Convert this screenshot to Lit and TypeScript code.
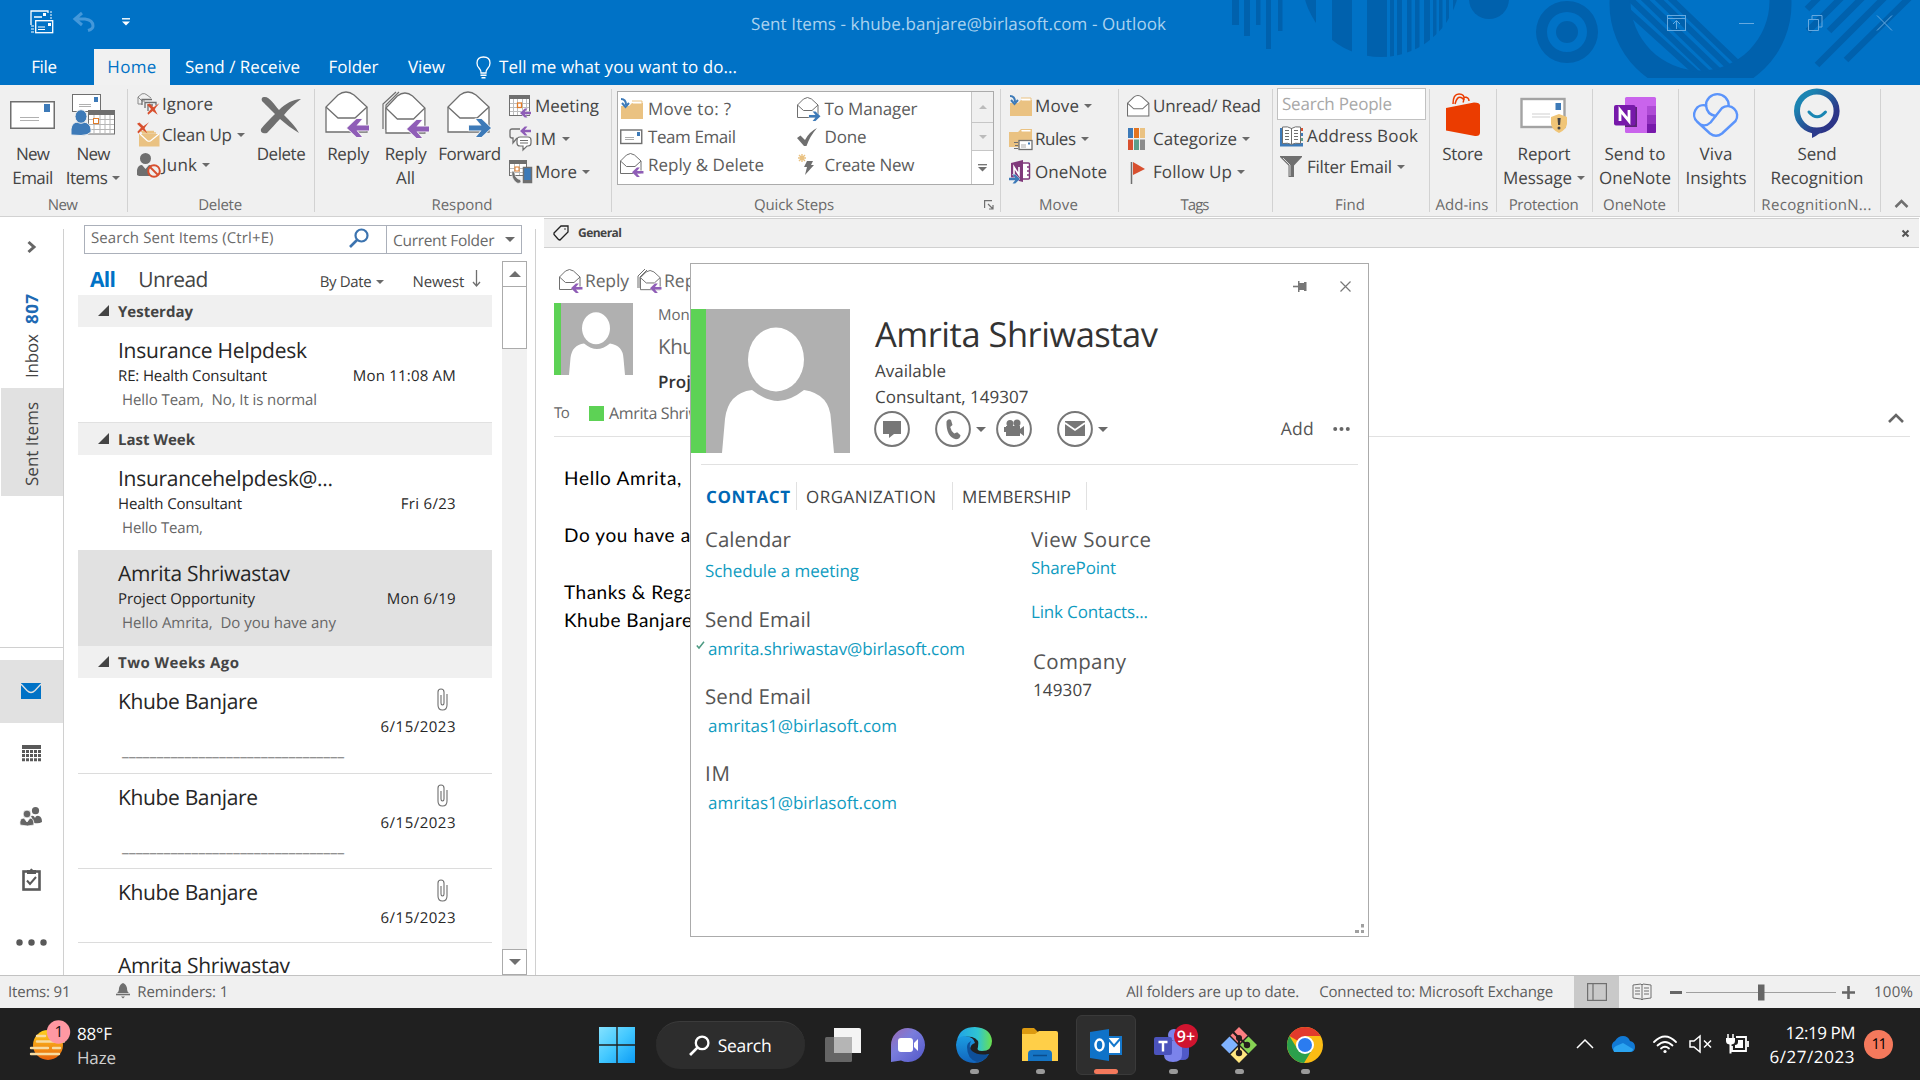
import { LitElement, html, svg, css, nothing } from "lit";
import { customElement } from "lit/decorators.js";

const SANS = '"Open Sans"';
const BODY = "Lato";
const ctx = document.createElement("canvas").getContext("2d")!;

/** Text run tracked so that it takes the given advance width. */
function t(text: string, width: number | null, size = 17, cls = "", family = SANS) {
  let spacing = 0;
  if (width !== null) {
    const weight = cls.includes("bold") ? 700 : cls.includes("semi") ? 600 : 400;
    ctx.font = `${weight} ${size}px ${family}`;
    spacing = (width - ctx.measureText(text).width) / Math.max(1, text.length - 1);
    spacing = Math.max(-1.6, Math.min(1.2, spacing));
  }
  return html`<span class="t ${cls}" style="font-size:${size}px;letter-spacing:${spacing.toFixed(3)}px">${text}</span>`;
}

const ic = (w: number, h: number, body: unknown, vb = `0 0 ${w} ${h}`) =>
  html`<svg class="ic" width=${w} height=${h} viewBox=${vb} fill="none">${body}</svg>`;

const caret = html`<i class="caret"></i>`;
const G = "#6f6f6f";
const P = "#8f5db7";
const B = "#3d7ab8";
const O = "#eac282";
const R = "#d8502f";

const arrowL = (x: number, y: number, s: number, c = P) => svg`
  <g transform="translate(${x} ${y}) scale(${s})"><path d="M22 7.5H9.500L15 1H9.500L0 10l9.500 9H15L9.500 12.500H22z" fill=${c} stroke="#f6f6f6" stroke-width="1.500" paint-order="stroke"/></g>`;
const arrowR = (x: number, y: number, s: number, c = B) => svg`
  <g transform="translate(${x + 22 * s} ${y}) scale(${-s} ${s})"><path d="M22 7.5H9.500L15 1H9.500L0 10l9.500 9H15L9.500 12.500H22z" fill=${c} stroke="#f6f6f6" stroke-width="1.500" paint-order="stroke"/></g>`;
const openEnv = (k = 1.3) => svg`
  <path d="M1 41V16L13 4Q21-2 29 4L42 16V41z" fill="#fff" stroke=${G} stroke-width=${k}/>
  <path d="M1 16L13 27H30L42 16" stroke=${G} stroke-width=${k}/>`;
const bigReply = ic(46, 48, svg`${openEnv()}${arrowL(22, 27, 1)}`);
const bigReplyAll = ic(48, 48, svg`<path d="M1 38V13L14 1M4 39V14L17 1" stroke=${G} stroke-width="1.2"/><g transform="translate(3 1) scale(.95 1)">${openEnv()}</g>${arrowL(25, 28, 1)}`);
const bigForward = ic(46, 48, svg`${openEnv()}${arrowR(22, 27, 1)}`);
const smReply = ic(24, 24, svg`<g transform="scale(.5)">${openEnv(2)}</g>${arrowL(12, 14, 0.52)}`);
const smReplyAll = ic(25, 24, svg`<path d="M1 19V7L8 0M3 19V8L10 1" stroke=${G}/><g transform="translate(3 1) scale(.48)">${openEnv(2)}</g>${arrowL(13, 14, 0.52)}`);
const smForward = ic(24, 24, svg`<g transform="scale(.5)">${openEnv(2)}</g>${arrowR(12, 14, 0.52)}`);
const smRead = ic(23, 22, svg`<g transform="scale(.52 .51)">${openEnv(2)}</g>`);

const newEmail = ic(45, 28, svg`<rect x=".75" y=".75" width="43.5" height="26.5" fill="#fff" stroke=${G} stroke-width="1.5"/><path d="M34 3h6v8h-6z" fill=${B}/><path d="M10 16.500h19M10 19.500h19" stroke="#b0b0b0"/>`);
const newItems = ic(44, 42, svg`<rect x="1.500" y=".5" width="28" height="17" fill="#fff" stroke=${G}/><path d="M23 3h4v5h-4z" fill=${B}/><path d="M8 10.500h12M8 12.500h12" stroke="#b0b0b0"/>
  <rect x="17.500" y="16.500" width="26" height="23.500" fill="#fff" stroke=${G}/><path d="M17 16h27v5H17z" fill=${G}/><path d="M18 25.500h25M18 30.500h25M18 35.500h25M23 21v18M29 21v18M34 21v18M39 21v18" stroke="#b5b5b5"/><rect x="22.500" y="24.500" width="5" height="5" fill="#fff" stroke="#e07b28"/>
  <path d="M0 41V35Q1 28 7 28H13Q19 29 20 35V38Q17 41.500 10 41.500Z" fill=${B} stroke="#f0f0f0"/><ellipse cx="10" cy="22.500" rx="6" ry="6.800" fill=${B} stroke="#f0f0f0"/>`);
const cross = (x: number, y: number, s: number, c: string) => svg`<path transform="translate(${x} ${y}) scale(${s})" d="M0 1L3-.5 8 4 15-1C12 3 10 5 9.500 6.500L13 13C9 10 7 9 7 8.500L1.500 13 .5 11 5 6z" fill=${c}/>`;
const ignore = ic(23, 23, svg`<path d="M1 11V4L5 .8Q8 0 10 2l4 3M1 4l4 4h3M1 11h4" stroke="#8a8a8a"/><path d="M5 12V6.500H15M8 15V9.500H19v3M11 18v-6h5" stroke=${G} stroke-width="1.300"/>${cross(10, 11, 0.82, R)}`);
const cleanup = ic(23, 24, svg`<path d="M5 10h14M4 8.500h13" stroke=${O} stroke-width="1.500"/><path d="M2 11H22.500V23.500H2z" fill=${O}/><path d="M3 11l7 6.500q2 1.500 4 0L22 11" stroke="#fff" stroke-width="1.200"/>${cross(0, 0, 0.8, R)}`);
const junk = ic(24, 25, svg`<ellipse cx="8.500" cy="5.500" rx="5.500" ry="5.500" fill=${G}/><path d="M0 22v-5Q1 12 5 12l3.500 4L12 12q4 0 5 4v7H2z" fill=${G}/><circle cx="17" cy="18" r="5.800" fill="#f0f0f0" stroke=${R} stroke-width="2"/><path d="M13 14l8 8" stroke=${R} stroke-width="2"/>`);
const bigX = ic(42, 38, svg`<path d="M4 1C9 0 14 8 19 14 25 8 33 3 41 3 34 8 28 14 24 19 30 25 36 31 39 37 32 33 26 28 20 23 15 28 11 33 7 37 4 38 0 37 1 33 4 29 9 24 15 18 9 12 4 7 2 5 1 3 2 1 4 1z" fill=${G}/>`);
const meeting = ic(24, 23, svg`<rect x=".5" y=".5" width="20" height="20" fill="#fff" stroke=${G}/><path d="M0 0h21v4H0z" fill=${G}/><path d="M1 8.500h19M1 12.500h19M1 16.500h19M4.500 4v16M8.500 4v16M13.500 4v16M17.500 4v16" stroke="#bdbdbd"/><rect x="8.500" y="8" width="4" height="4.500" fill="#fff" stroke="#e07b28" stroke-width="1.300"/>${arrowL(11, 13, 0.5)}`);
const im = ic(24, 24, svg`<path d="M11 2H3Q1 2 1 4v5q0 2 2 2h1v5l4-5" stroke=${G} stroke-width="1.300"/>${arrowL(11, -1, 0.5)}<path d="M11 10h8q3 0 3 3v3q0 3-3 3h-1l-4 4v-4h-3q-3 0-3-3v-3q0-3 3-3zM11 13.500h8M11 16h8" fill="#fff" stroke=${G} stroke-width="1.200"/>`);
const more = ic(24, 24, svg`<rect x=".5" y=".5" width="17" height="15" fill="#fff" stroke=${G}/><path d="M0 0h18v4H0z" fill=${G}/><path d="M1 8.500h16M1 12.500h16M5.500 4v11M10.500 4v11" stroke="#bdbdbd"/><rect x="6" y="7" width="4" height="4" fill="#fff" stroke="#e07b28"/><path d="M3 11q3 0 3 4 0 2 3 4 3 0 3 3-2 2-4 1-6-4-5-12z" fill=${G} stroke="#f0f0f0" stroke-width=".6"/><rect x="14.500" y="7.500" width="8" height="15" fill=${B} stroke=${G} stroke-width="1.500"/><path d="M14 20h9v3h-9z" fill=${G}/>`);
const folderArrow = ic(24, 22, svg`<path d="M1 8h8l3-3h11v16H1z" fill=${O}/><path d="M12 3h10v3H13" fill="#fff" stroke=${O}/><path d="M1 1q5 0 5 6M2 5l3.500 4L9 5" stroke=${B} stroke-width="2"/>`);
const rules = ic(24, 23, svg`<path d="M0 4h9l3-3h11v18H0z" fill=${O}/><path d="M12 1.500h10V4h-9" fill="#fff" stroke=${O}/><rect x="10" y="12.500" width="13" height="9" fill="#fff" stroke=${G} stroke-width="1.300"/><path d="M12 17h5M12 19h5" stroke="#aaa"/><path d="M19 14.500h2v2h-2z" fill=${B}/><path d="M5 14.500h4M6 17.500h3M5 20.500h4" stroke=${G}/>`);
const onenoteSm = ic(24, 24, svg`<rect x="12" y="3" width="8.500" height="16" rx="1" fill="#fff" stroke="#80397b" stroke-width="1.500"/><path d="M18 7h3M18 11h3M18 15h3" stroke="#80397b" stroke-width="1.500"/><path d="M2 3l12-3v22L2 19z" fill="#80397b"/><path d="M5 15V7l5 8V7" stroke="#fff" stroke-width="1.600"/>${arrowR(0, 14, 0.5)}`);
const mailSm = ic(24, 16, svg`<rect x=".75" y="1" width="21" height="13.500" fill="#fff" stroke=${G} stroke-width="1.400"/><path d="M17 3h3v4h-3z" fill=${B}/><path d="M5 8.500h9M5 10.500h9" stroke="#aaa"/>`);
const tick = ic(22, 19, svg`<path d="M0 10l3.500-2.500L8 12Q12 4 20 0 13 8 9.500 18H7z" fill=${G}/>`);
const spark = ic(24, 24, svg`<path d="M5 1v8M1 5h8M2 2l6 6M8 2L2 8" stroke=${O} stroke-width="1.400"/><path d="M10 8h6l-2 4h3L8 22l2-8H7z" fill=${G}/>`);
const categorize = ic(20, 23, svg`<path d="M1 0h5v10H1z" fill=${B}/><path d="M7 0h5v10H7z" fill="#e3741f"/><path d="M13 0h5v10h-5z" fill=${O}/><path d="M1 11.500h5v10.500H1z" fill=${R}/><path d="M7 11.500h5v10.500H7z" fill="#5d9e8a"/><path d="M13 11.500h5v10.500h-5z" fill="#8c8c8c"/>`);
const flag = ic(20, 23, svg`<path d="M4.500 1v22" stroke=${G} stroke-width="1.500"/><path d="M6 1l12 7-12 6z" fill=${R}/>`);
const book = ic(24, 21, svg`<path d="M0 2h3v15h20v3.500H0z" fill=${B}/><path d="M2.500 1Q8 0 11.500 2.500 15 0 20.500 1v16.500Q15 16.500 11.500 18.500 8 16.500 2.500 17.500z" fill="#fff" stroke=${G}/><path d="M11.500 2v16M5 4.500h4M5 7.500h4M5 10.500h4M5 13.500h4M14 4.500h4M14 7.500h4M14 10.500h4M14 13.500h4" stroke=${G}/><path d="M21 2h2v3h-2z" fill=${R}/><path d="M21 7h2v3h-2z" fill=${B}/><path d="M21 12h2v3h-2z" fill="#5d9e8a"/>`);
const funnel = ic(24, 22, svg`<path d="M0 0h22v1l-8 8.500V21H8.500V9.500L0 1z" fill=${G}/><path d="M3 2l7 7v11" stroke="#d6d6d6"/>`);
const store = ic(36, 43, svg`<path d="M8 11Q8 1 14 1t5 6M10 11Q12 3 16 4.500t2 5M19 4q5 0 5 4" stroke="#eb3c00" stroke-width="1.500"/><path d="M1 15L29 9.500q6 0 6 3v27q0 4-5 3.500L1 37.500z" fill="#eb3c00"/>`);
const report = ic(48, 36, svg`<rect x="1.500" y="2" width="43" height="28" fill="#fff" stroke="#a3a3a3" stroke-width="2.400"/><path d="M35.500 6h5.500v7h-5.500z" fill=${B}/><path d="M12 17h18M12 20h18" stroke="#cfcfcf"/><path d="M39 17l8 3v7q-1 6-8 9-7-3-8-9v-7z" fill="#f0c577"/><path d="M37.500 21h3.200l-.6 7h-2z" fill="#444"/><circle cx="39" cy="31" r="1.500" fill="#444"/>`);
const onenoteBig = ic(44, 38, svg`<rect x="12" y="1" width="31" height="36" rx="1.500" fill="#c964ec"/><path d="M34 10h9v9h-9z" fill="#ae4bd5"/><path d="M34 19h9v9h-9z" fill="#9332bf"/><path d="M34 28h9v7.500q0 1.500-1.500 1.500H34z" fill="#7719aa"/><rect x="12" y="11" width="12" height="20" fill="#34104c" opacity=".75"/><rect x="1" y="9" width="21.500" height="20.500" rx="2" fill="#7719aa"/><path d="M7 25v-11l9 11v-11" stroke="#fff" stroke-width="2.800"/>`);
const viva = ic(46, 47, svg`<g stroke="#5b94fb" stroke-width="2.400" stroke-linejoin="round" stroke-linecap="round"><path d="M13 14.500a11.300 11.300 0 1 1 22.700 0"/><path d="M13 14.500q1 9 9.500 10.500"/><path d="M13 14.500A9.500 9.500 0 0 0 4 30.500L17 42.500q6 4.500 12 0L42.500 30A9.500 9.500 0 0 0 29 17L17.500 31.500q-4 4-9 2.500"/></g>`);
const recog = ic(46, 49, svg`<defs><linearGradient id="rg" x1="0" y1="0" x2="1" y2="1"><stop offset=".2" stop-color="#1b84b2"/><stop offset=".75" stop-color="#2c3587"/></linearGradient></defs><ellipse cx="22.800" cy="21" rx="19.800" ry="19.500" stroke="url(#rg)" stroke-width="6"/><path d="M18 39h11q-1 4-11 9z" fill="#2c3b8c"/><path d="M15 22q8 9.500 16.500 0" stroke="#1a86b3" stroke-width="3" stroke-linecap="round"/>`);

const avatarShape = svg`<path d="M0 0h144v144H0z" fill="#b0b0b0"/><ellipse cx="70" cy="50.500" rx="28" ry="32" fill="#fff"/><path d="M16 144l3-34Q22 84 46 81q14 11 26 11t26-11q26 4 27 30l3 33z" fill="#fff"/>`;
const clip = ic(12, 23, svg`<path d="M1 7v10q0 5 4.500 5t4.500-5V6M1 7V4q0-3 3-3t3 3v11q0 2-1.500 2T4 15V7" stroke=${G} stroke-width="1.100"/>`);
const mag = (c: string, s = 20) => ic(s, s, svg`<circle cx="12.500" cy="7.500" r="6" stroke=${c} stroke-width="2.200"/><path d="M8 12l-7 7" stroke=${c} stroke-width="2.600"/>`, "0 0 20 20");

interface Mail { name: string; nw: number; subj?: string; sw?: number; date: string; dw: number; pre?: string; pw?: number; cls?: string; clip?: boolean }
const mails: (Mail | { head: string; w: number; cls?: string })[] = [
  { head: "Yesterday", w: 75 },
  { name: "Insurance Helpdesk", nw: 189, subj: "RE: Health Consultant", sw: 149, date: "Mon 11:08 AM", dw: 103, pre: "Hello Team,  No, It is normal", pw: 195 },
  { head: "Last Week", w: 77, cls: "lined" },
  { name: "Insurancehelpdesk@...", nw: 215, subj: "Health Consultant", sw: 124, date: "Fri 6/23", dw: 55, pre: "Hello Team,", pw: 81 },
  { name: "Amrita Shriwastav", nw: 172, subj: "Project Opportunity", sw: 137, date: "Mon 6/19", dw: 69, pre: "Hello Amrita,  Do you have any", pw: 214, cls: "sel" },
  { head: "Two Weeks Ago", w: 121 },
  { name: "Khube Banjare", nw: 140, date: "6/15/2023", dw: 75, pre: "_".repeat(32), pw: 222, clip: true, cls: "ruled tall" },
  { name: "Khube Banjare", nw: 140, date: "6/15/2023", dw: 75, pre: "_".repeat(32), pw: 222, clip: true, cls: "ruled" },
  { name: "Khube Banjare", nw: 140, date: "6/15/2023", dw: 75, clip: true, cls: "ruled short" },
  { name: "Amrita Shriwastav", nw: 172, date: "", dw: 0, cls: "last" },
];

@customElement("app-root")
export class AppRoot extends LitElement {
  static styles = css`
    :host { display: block; width: 1920px; height: 1080px; overflow: hidden; font-family: "Open Sans", "Noto Sans", sans-serif; color: #444; text-rendering: geometricPrecision; }
    * { box-sizing: border-box; }
    .t { white-space: pre; display: inline-block; line-height: 24px; }
    .bold { font-weight: 700; } .semi { font-weight: 600; }
    .ic { display: block; flex: none; overflow: visible; }
    .caret { display: inline-block; flex: none; width: 0; height: 0; border: 4px solid transparent; border-top: 4px solid #6a6a6a; border-bottom: 0; margin-left: 5px; vertical-align: middle; }
    .row { display: flex; align-items: center; }
    .win { display: flex; flex-direction: column; height: 1080px; background: #fff; position: relative; }

    .top { height: 85px; background: #0072c6; position: relative; flex: none; color: #fff; }
    .art { position: absolute; right: 0; top: 0; }
    .title { height: 49px; display: flex; align-items: center; padding-left: 30px; position: relative; }
    .qat { display: flex; align-items: center; width: 721px; height: 49px; padding-bottom: 6px; }
    .qat .undo { margin-left: 19px; } .qat .cust { margin-left: 27px; }
    .caption { color: #abd2ef; height: 26px; }
    .ctrls { display: flex; margin-left: auto; gap: 52px; padding-right: 27px; padding-bottom: 4px; }
    .tabs { display: flex; height: 36px; position: relative; }
    .tab { display: flex; align-items: center; justify-content: center; color: #fff; }
    .file { width: 94px; padding-right: 6px; } .home { width: 76px; background: #f1f1f1; color: #0072c6; }
    .sr { width: 145px; } .fo { width: 77px; } .vi { width: 69px; } .tell { margin-left: 15px; gap: 8px; }

    .ribbon { height: 132px; flex: none; background: #f0f0f0; border-bottom: 1px solid #d2d2d2; display: grid; grid-template-columns: 128px 187px 297px 389px 118px 154px 157px 67px 96px 86px 76px 126px 39px; color: #444; }
    .group { display: flex; flex-direction: column; background: linear-gradient(#d2d2d2, #d2d2d2) right 0 top 4px / 1px 123px no-repeat; }
    .gbody { display: flex; height: 108px; }
    .glabel { height: 23px; display: flex; justify-content: center; align-items: center; color: #6a6a6a; position: relative; padding-right: 3px; }
    .wide .glabel { padding-right: 25px; }
    .launch { position: absolute; right: 7px; top: 7px; }
    .big { display: flex; flex-direction: column; align-items: center; }
    .bigic { height: 57px; padding-top: 2px; display: flex; align-items: center; }
    .bigl { display: flex; align-items: center; height: 24px; }
    .w65 { width: 65px; } .w56 { width: 56px; } .w63 { width: 62px; } .w66 { width: 66px; } .w50 { width: 49px; } .w78 { width: 79px; } .full { width: 100%; padding-right: 2px; }
    .smalls { display: flex; flex-direction: column; }
    .d30 { padding-top: 4.500px; } .d30 .sm { height: 30.500px; }
    .d33 { padding-top: 4.500px; } .d33 .sm { height: 33px; }
    .sm { display: flex; align-items: center; }
    .sic { width: 26px; display: flex; }
    .pl9 { padding-left: 9px; width: 122px; padding-top: 4px; } .pl9 .sic { width: 25px; } .pl8 { padding-left: 8px; } .find { padding-left: 4px; padding-top: 5px; }
    .find .sic { width: 30px; padding-left: 3px; }
    .find .sp { height: 32px; margin-top: -2px; margin-bottom: 1px; width: 149px; border: 1px solid #c1c1c1; background: #fff; padding-left: 4px; color: #a8a8a8; }
    .steps { margin: 6px 0 0 5px; width: 377px; height: 94px; border: 1px solid #ababab; display: flex; background: #fff; color: #5c5c5c; }
    .scol { padding: 3px 0 0 2px; width: 177px; } .scol .sm { height: 28px; } .scol .sic { width: 28px; }
    .sscroll { margin-left: auto; width: 22px; display: grid; grid-template-rows: 31px 28px 1fr; border-left: 1px solid #c6c6c6; }
    .sscroll div { display: flex; align-items: center; justify-content: center; background: #f0f0f0; border-bottom: 1px solid #c6c6c6; } .sscroll div:last-child { background: #fff; border: 0; }
    .collapse { display: flex; align-items: flex-end; padding: 0 0 8px 13px; }

    .main { display: flex; flex: 1; min-height: 0; }
    .nav { width: 64px; display: flex; flex-direction: column; background: linear-gradient(#d0d0d0, #d0d0d0) right 0 top 12px / 1px 100% no-repeat; }
    .exp { height: 61px; padding: 24px 0 0 27px; }
    .vt { writing-mode: vertical-rl; transform: rotate(180deg); width: 62px; margin-left: 1px; display: flex; align-items: center; justify-content: center; color: #444; gap: 10px; }
    .vt .t { line-height: 60px; }
    .inbox { height: 110px; padding-top: 0; padding-bottom: 5px; } .inbox .t.bold { color: #1e6ab4; }
    .sent { height: 108px; background: #e1e1e1; padding-bottom: 4px; }
    .mods { margin-top: 151px; border-top: 1px solid #d0d0d0; width: 63px; padding-top: 12px; display: flex; flex-direction: column; }
    .mod { height: 63px; display: flex; align-items: center; justify-content: center; padding: 0 1px 2px 0; }
    .mod.on { background: #e1e1e1; }

    .list { width: 472px; padding-left: 14px; background: linear-gradient(#d0d0d0, #d0d0d0) right 0 top 12px / 1px 100% no-repeat; display: flex; flex-direction: column; overflow: hidden; }
    .search { margin: 8px 0 1px 6px; width: 438px; height: 29px; border: 1px solid #abb0ba; display: flex; color: #6a6a6a; flex: none; }
    .sbox { width: 302px; display: flex; justify-content: space-between; padding: 0 17px 3px 6px; align-items: center; border-right: 1px solid #abb0ba; }
    .sdd { display: flex; align-items: center; padding-left: 6px; padding-top: 1px; } .sdd .caret { border-width: 5px 5px 0; margin-left: 11px; margin-bottom: 2px; }
    .lwrap { display: flex; flex: 1; min-height: 0; }
    .lcol { width: 414px; overflow: hidden; }
    .filter { height: 40px; display: flex; align-items: center; padding: 9px 0 0 12px; }
    .filter .all { color: #0072c6; } .filter .un { margin-left: 23px; } .filter .by { margin-left: 112px; margin-top: 4px; } .filter .nw { margin-left: 28px; margin-top: 4px; } .filter svg { margin: -1px 0 0 8px; }
    .ghead { height: 32px; background: #f0f0f0; display: flex; align-items: center; gap: 9px; padding-left: 20px; }
    .ghead .t { margin-top: 1px; } .ghead svg { margin-top: -1px; }
    .ghead.lined { height: 33px; border-top: 1px solid #e1e1e1; }
    .mail { height: 95px; padding: 9px 36px 0 40px; color: #262626; }
    .mail.sel { background: #e1e1e1; height: 96px; } .mail.ruled { border-bottom: 1px solid #dcdcdc; padding-top: 8.500px; } .mail.tall { height: 96px; padding-top: 9px; } .mail.short { height: 74px; } .mail.last { padding-top: 8px; }
    .m1 { height: 30px; display: flex; align-items: center; justify-content: space-between; } .m1 svg { margin: -5px 7px 0 0; }
    .m2 { height: 20px; display: flex; align-items: center; justify-content: space-between; }
    .m3 { height: 20px; display: flex; align-items: center; margin-top: 4px; padding-left: 4px; color: #666; }
    .sb { margin: 6px 0 0 10px; width: 25px; background: #f1f1f1; display: flex; flex-direction: column; }
    .sbb { height: 26px; border: 1px solid #ababab; background: #fff; display: flex; align-items: center; justify-content: center; }
    .thumb { height: 63px; margin-top: -1px; border: 1px solid #ababab; background: #fff; } .down { margin-top: auto; }

    .read { flex: 1; padding-left: 8px; min-width: 0; }
    .rlabel { margin: 1px 1px 0 0; height: 30px; background: #f0f0f0; border: solid #d0d0d0; border-width: 1px 0; display: flex; align-items: center; padding: 0 10px 0 9px; gap: 9px; color: #444; } .rlabel .x { margin-left: auto; }
    .rbar { height: 55px; padding: 11px 0 0 15px; display: flex; align-items: center; gap: 2px; color: #666; } .rbar .second { margin-left: 6px; }
    .rhead { display: flex; padding-left: 10px; height: 94px; }
    .av { width: 79px; height: 72px; display: flex; background: #5dd255; } .av svg { margin-left: 7px; }
    .rmeta { margin-left: 25px; display: flex; flex-direction: column; color: #666; }
    .h24 { height: 24px; } .h40 { height: 40px; display: flex; align-items: center; } .h30 { height: 30px; display: flex; align-items: center; color: #333; }
    .rto { margin: 0 10px; height: 40px; padding-bottom: 7px; border-bottom: 1px solid #e1e1e1; display: flex; align-items: center; color: #666; } .rto .pres { width: 15px; height: 15px; background: #5dd255; margin: 0 5px 0 21px; } .rto svg { margin-left: auto; margin-right: 6px; margin-top: 9px; }
    .body { padding: 28px 0 0 20px; color: #000; font-family: Lato, sans-serif; } .body .t { display: block; line-height: 28.400px; height: 28.400px; }

    .card { position: absolute; left: 690px; top: 263px; width: 679px; height: 674px; border: 1px solid #ababab; background: #fff; }
    .ctop { height: 45px; display: flex; justify-content: flex-end; align-items: center; padding: 0 17px 1px 0; gap: 33px; }
    .chead { display: flex; height: 144px; } .photo { display: flex; background: #5dd255; padding-left: 15px; width: 159px; }
    .cinfo { flex: 1; padding-left: 25px; color: #444; display: flex; flex-direction: column; }
    .cname { height: 49px; display: flex; align-items: center; color: #333; padding-top: 2px; } .cname .t { line-height: 50px; }
    .cl { height: 26px; display: flex; align-items: center; }
    .acts { height: 38px; display: flex; align-items: center; margin-left: -1px; }
    .acts .gap1 { margin-left: 25px; } .acts .caret { border-width: 5px 5px 0; margin: 0 0 0 5px; } .acts .vid { margin-left: 10px; } .acts .mail2 { margin-left: 25px; }
    .acts .add { margin-left: auto; margin-right: 19px; color: #555; } .acts .dots { margin-right: 18px; }
    .ctabs { margin: 11px 10px 0; border-top: 1px solid #e1e1e1; padding: 17px 0 0 5px; display: flex; height: 53px; }
    .ct { height: 28px; border-right: 1px solid #e1e1e1; display: flex; align-items: center; padding-top: 1px; } .ct1 { width: 91px; color: #0067b5; } .ct2 { width: 156px; padding-left: 9px; } .ct3 { width: 134px; padding-left: 9px; }
    .cbody { display: grid; grid-template-columns: 326px 1fr; padding: 8px 0 0 14px; }
    .sec { display: flex; flex-direction: column; } .sec .h { height: 30px; display: flex; align-items: center; color: #555; } .sec .l { height: 24px; display: flex; align-items: center; color: #0f9bc0; }
    .sec .ind { padding-left: 3px; margin-top: 2px; } .chk { margin: -8px 3px 0 -12px; }
    .mb1 { margin-bottom: 22px; } .mt1 { margin-top: 4px; } .sec .near { margin-top: 1px; } .mt2 { margin-top: 20px; } .co { padding-left: 2px; margin-top: 23px; } .sec .dark { color: #444; margin-top: 1px; }
    .s23 { margin-bottom: 21px; }
    .grip { position: absolute; right: 4px; bottom: 3px; }

    .status { height: 33px; flex: none; background: #f0f0f0; border-top: 1px solid #c2c2c2; display: flex; align-items: center; color: #5c5c5c; padding-left: 8px; }
    .status .bell { margin: 0 7px 2px 46px; } .status .allf { margin-left: auto; } .status .conn { margin: 0 21px 0 20px; }
    .vw { width: 45px; height: 32px; background: #c9c9c9; display: flex; align-items: center; justify-content: center; } .bk { margin-left: 13px; } .zoom { margin-left: 18px; margin-right: 18px; } .pct { width: 46px; }

    .task { height: 72px; flex: none; background: #202020; display: flex; color: #fff; position: relative; }
    .weather { width: 599px; display: flex; padding-left: 28px; } .weather .wi { margin-top: 10px; } .wt { margin-left: 11px; padding-top: 14px; display: flex; flex-direction: column; } .wt .haze { color: #cfcfcf; }
    .app { display: flex; flex-direction: column; align-items: center; justify-content: center; height: 72px; position: relative; padding-top: 2px; }
    .app.dot::after { content: ""; position: absolute; left: calc(50% - 4px); bottom: 6px; width: 9px; height: 5px; border-radius: 3px; background: #9a9a9a; }
    .pill { margin: 13px 20px 0 21px; width: 149px; height: 48px; border-radius: 24px; background: #2d2d2d; border-top: 1px solid #3b3b3b; display: flex; align-items: center; justify-content: center; gap: 8px; padding-right: 1px; }
    .ol { width: 60px; height: 60px; margin: 7px 0 0; border-radius: 6px; background: #2e2e2e; border: 1px solid #3a3a3a; padding-top: 0; } .app.ol::after { content: ""; position: absolute; left: 17px; bottom: 0; width: 24px; height: 5px; border-radius: 3px; background: #f4795c; }
    .a36 { width: 36px; } .g30 { margin-left: 30px; } .g29 { margin-left: 29px; } .g18 { margin-left: 18px; }
    .tray { margin-left: auto; display: flex; align-items: center; padding-right: 27px; } .clock { display: flex; flex-direction: column; align-items: flex-end; width: 86px; margin: 0 9px 0 19px; padding-top: 1px; }
    .nb { width: 29px; height: 29px; background: #f4795c; border-radius: 50%; color: #000; display: flex; align-items: center; justify-content: center; }
    .g1 { margin-left: 16px; } .g2 { margin-left: 18px; } .g3 { margin-left: 12px; } .g4 { margin-left: 13px; }
  `;

  private small(icon: unknown, text: string, w: number, drop = false) {
    return html`<div class="sm"><div class="sic">${icon}</div>${t(text, w)}${drop ? caret : nothing}</div>`;
  }
  private big(cls: string, icon: unknown, a: string, aw: number, b = "", bw = 0, drop = false) {
    return html`<div class="big ${cls}"><div class="bigic">${icon}</div><div class="bigl">${t(a, aw)}</div>
      ${b ? html`<div class="bigl">${t(b, bw)}${drop ? caret : nothing}</div>` : nothing}</div>`;
  }
  private group(label: string, w: number, body: unknown, extra: unknown = nothing, cls = "") {
    return html`<section class="group ${cls}"><div class="gbody">${body}</div><div class="glabel">${label ? t(label, w, 15) : nothing}${extra}</div></section>`;
  }

  private art() {
    const c = "#0061ad";
    return html`<svg class="art" width="700" height="85" viewBox="1220 0 700 85" fill=${c}>
      <defs><clipPath id="c1"><circle cx="1381" cy="-22" r="79"/></clipPath><clipPath id="c2"><circle cx="1700" cy="1" r="70.500"/></clipPath><clipPath id="c3"><path d="M1590 0h220v78h-220z"/></clipPath></defs>
      <path d="M1232 0h7v25h-7zM1244 0h6v36h-6zM1256 0h4.500v25h-4.500zM1266 0h5v49h-5zM1278 0h4.500v31h-4.500z"/>
      <g clip-path="url(#c1)"><path d="M1300 0h16v30h-16zM1332 0h20v60h-20zM1367 0h20v60h-20zM1390 0h4v60h-4zM1397 0h5v60h-5zM1407 0h4.500v60h-4.500zM1415 0h4.500v60h-4.500zM1424 0h6v60h-6zM1433 0h3.500v60h-3.500zM1439 0h3.500v60h-3.500zM1446 0h3v60h-3zM1453 0h4v60h-4z"/></g>
      <circle cx="1489" cy="-1" r="20"/>
      <path fill-rule="evenodd" d="M1536 32a31 31 0 1 0 62 0a31 31 0 1 0-62 0zM1547 32a20 20 0 1 1 40 0a20 20 0 1 1-40 0z"/><circle cx="1567" cy="32" r="11"/>
      <g clip-path="url(#c3)"><path fill-rule="evenodd" d="M1609.500 4a91 91 0 1 0 182 0a91 91 0 1 0-182 0zM1630.500 1a69.500 69.500 0 1 1 139 0a69.500 69.500 0 1 1-139 0z"/></g>
      <g clip-path="url(#c2)" stroke=${c} stroke-width="6"><path d="M1618 2L1700 76M1627 -4L1709 74M1641 -4L1722 74M1655 -4L1736 74M1668 -4L1749 74" /></g>
      <g stroke=${c} stroke-width="6.500"><path d="M1819 -3L1807 9M1842 -3L1808 31M1863 -3L1829 31M1885 -3L1817 65M1910 -3L1846 60"/></g>
    </svg>`;
  }

  private renderTop() {
    const w = "#66a9df";
    return html`<header class="top">${this.art()}
      <div class="title"><div class="qat">
        ${ic(24, 24, svg`<path d="M1 15V1h17v2M4 7h8" stroke="#fff" stroke-width="1.300"/><path d="M13 3h3v3h-3z" fill="#fff"/><path d="M20 2h2M20 5h2M20 8h2M1 16h3M1 19h3M1 22h3" stroke="#fff"/><rect x="5.700" y="10.700" width="17" height="12" stroke="#fff" stroke-width="1.300"/><path d="M8 17h7M8 19.500h7" stroke="#fff"/><path d="M18 13h3v3h-3z" fill="#fff"/>`)}
        <span class="undo">${ic(22, 20, svg`<path d="M9 1L2 7l7 6M2 7h10q8 1 8 7 0 3-5 4.500" stroke="#4498da" stroke-width="3"/>`)}</span>
        <span class="cust">${ic(8, 8, svg`<path d="M0 .8h8" stroke="#fff" stroke-width="1.400"/><path d="M0 3.500h8L4 7.500z" fill="#fff"/>`)}</span></div>
        <div class="caption">${t("Sent Items - khube.banjare@birlasoft.com - Outlook", 415)}</div>
        <div class="ctrls">
          ${ic(19, 16, svg`<rect x=".5" y=".5" width="18" height="15" stroke=${w}/><path d="M1 3.500h17M9.500 14V6M6 9l3.500-3.500L13 9" stroke=${w}/>`)}
          ${ic(17, 16, svg`<path d="M1 8.500h15" stroke=${w}/>`)}
          ${ic(17, 16, svg`<path d="M5 4V.5h10V12h-3M1.500 4.500h10v11h-10z" stroke=${w}/>`)}
          ${ic(17, 16, svg`<path d="M1 .5l15 15M16 .5l-15 15" stroke=${w}/>`)}
        </div></div>
      <nav class="tabs"><div class="tab file">${t("File", 26)}</div><div class="tab home">${t("Home", 49)}</div><div class="tab sr">${t("Send / Receive", 115)}</div><div class="tab fo">${t("Folder", 50)}</div><div class="tab vi">${t("View", 37)}</div>
        <div class="tab tell">${ic(15, 23, svg`<path d="M5 17q0-3-2-5-2-2-2-5 0-6 6.500-6T14 7q0 3-2 5-2 2-2 5z" stroke="#fff" stroke-width="1.300"/><path d="M4.500 19.200h6M5.500 21.800h4" stroke="#fff" stroke-width="1.400"/>`)}${t("Tell me what you want to do...", 238)}</div></nav>
    </header>`;
  }

  private renderRibbon() {
    const up = (c: string) => ic(8, 4, svg`<path d="M0 4L4 0l4 4z" fill=${c}/>`);
    return html`<div class="ribbon">
      ${this.group("New", 30, html`${this.big("w65", newEmail, "New", 34, "Email", 41)}${this.big("w56", newItems, "New", 34, "Items", 42, true)}`)}
      ${this.group("Delete", 44, html`<div class="smalls d30 pl9">${this.small(ignore, "Ignore", 51)}${this.small(cleanup, "Clean Up", 70, true)}${this.small(junk, "Junk", 35, true)}</div>${this.big("w63", bigX, "Delete", 49)}`)}
      ${this.group("Respond", 61, html`${this.big("w66", bigReply, "Reply", 42)}${this.big("w50", bigReplyAll, "Reply", 42, "All", 19)}${this.big("w78", bigForward, "Forward", 63)}
        <div class="smalls d33">${this.small(meeting, "Meeting", 64)}${this.small(im, "IM", 21, true)}${this.small(more, "More", 42, true)}</div>`)}
      ${this.group("Quick Steps", 80, html`<div class="steps">
        <div class="scol">${this.small(folderArrow, "Move to: ?", 83)}${this.small(mailSm, "Team Email", 88)}${this.small(smReply, "Reply & Delete", 116)}</div>
        <div class="scol">${this.small(smForward, "To Manager", 93)}${this.small(tick, "Done", 42)}${this.small(spark, "Create New", 90)}</div>
        <div class="sscroll"><div>${up("#bbb")}</div><div>${ic(8, 4, svg`<path d="M0 0h8L4 4z" fill="#bbb"/>`)}</div><div>${ic(9, 8, svg`<path d="M0 .7h9" stroke=${G} stroke-width="1.300"/><path d="M0 3h9L4.500 7.500z" fill=${G}/>`)}</div></div></div>`,
        html`<span class="launch">${ic(10, 10, svg`<path d="M.6 8V.6H8M4 4l5 5M9 5v4H5" stroke=${G} stroke-width="1.200"/>`)}</span>`, "wide")}
      ${this.group("Move", 39, html`<div class="smalls d33 pl8">${this.small(folderArrow, "Move", 44, true)}${this.small(rules, "Rules", 41, true)}${this.small(onenoteSm, "OneNote", 72)}</div>`)}
      ${this.group("Tags", 29, html`<div class="smalls d33 pl8">${this.small(smRead, "Unread/ Read", 108)}${this.small(categorize, "Categorize", 84, true)}${this.small(flag, "Follow Up", 79, true)}</div>`)}
      ${this.group("Find", 30, html`<div class="smalls d30 find"><div class="sm sp">${t("Search People", 110)}</div>${this.small(book, "Address Book", 111)}${this.small(funnel, "Filter Email", 85, true)}</div>`)}
      ${this.group("Add-ins", 53, this.big("full", store, "Store", 41))}
      ${this.group("Protection", 70, this.big("full", report, "Report", 53, "Message", 69, true))}
      ${this.group("OneNote", 63, this.big("full", onenoteBig, "Send to", 61, "OneNote", 72))}
      ${this.group("", 0, this.big("full", viva, "Viva", 33, "Insights", 61))}
      ${this.group("RecognitionN...", 110, this.big("full", recog, "Send", 39, "Recognition", 93))}
      <div class="collapse">${ic(15, 9, svg`<path d="M1.500 8l6-6 6 6" stroke=${G} stroke-width="2.500"/>`)}</div>
    </div>`;
  }

  private renderNav() {
    return html`<aside class="nav"><div class="exp">${ic(10, 12, svg`<path d="M1.500 1L7 6l-5.500 5" stroke="#666" stroke-width="3"/>`)}</div>
      <div class="vt inbox">${t("Inbox", 44)}${t("807", 30, 17, "bold")}</div>
      <div class="vt sent">${t("Sent Items", 84)}</div>
      <div class="mods">
        <div class="mod on">${ic(20, 16, svg`<path d="M0 0h20v16H0z" fill="#0072c6"/><path d="M0 1l6 6.500q4 4 8 0L20 1" stroke="#e1e1e1" stroke-width="1.300"/>`)}</div>
        <div class="mod">${ic(19, 17, svg`<path d="M0 0h19v4H0z" fill="#595959"/><path d="M0 6.500h19M0 10.500h19M0 14.700h19" stroke="#595959" stroke-width="3" stroke-dasharray="3 1"/>`)}</div>
        <div class="mod">${ic(22, 19, svg`<g fill="#666"><circle cx="15.500" cy="3.700" r="3.600"/><path d="M11 9q3-1 4 2 1-3 4-2 3 1 3 6-3 2-8 1z"/></g><g fill="#666" stroke="#fff" stroke-width=".8"><circle cx="7" cy="7" r="3.900"/><path d="M0 18q-1-7 4-7l3 4 3-4q4 0 4 7-6 2-14 0z"/></g>`)}</div>
        <div class="mod">${ic(19, 23, svg`<rect x="1.500" y="3.500" width="16" height="18" stroke="#595959" stroke-width="2.600"/><path d="M5 2h3q1-3 3 0h3v4H5z" fill="#595959"/><path d="M5 12.500l3 3.500 6-7" stroke="#595959" stroke-width="2"/>`)}</div>
        <div class="mod">${ic(31, 7, svg`<g fill="#595959"><circle cx="3.500" cy="3.500" r="3.200"/><circle cx="15.500" cy="3.500" r="3.200"/><circle cx="27.500" cy="3.500" r="3.200"/></g>`)}</div>
      </div></aside>`;
  }

  private renderList() {
    return html`<section class="list">
      <div class="search"><div class="sbox">${t("Search Sent Items (Ctrl+E)", 182.5, 15)}${mag("#3b73af")}</div><div class="sdd">${t("Current Folder", 101.5, 15.5)}${caret}</div></div>
      <div class="lwrap"><div class="lcol">
        <div class="filter"><span class="all">${t("All", 26, 21, "bold")}</span><span class="un">${t("Unread", 70, 21)}</span><span class="by row">${t("By Date", 52, 15)}${caret}</span><span class="nw row">${t("Newest", 52, 15)}</span>${ic(9, 18, svg`<path d="M4.500 0v16M1 12l3.500 4L8 12" stroke=${G} stroke-width="1.300"/>`)}</div>
        ${mails.map((m) => "head" in m
          ? html`<div class="ghead ${m.cls ?? ""}">${ic(11, 11, svg`<path d="M11 0v11H0z" fill="#444"/>`)}${t(m.head, m.w, 15, "bold")}</div>`
          : html`<article class="mail ${m.cls ?? ""}"><div class="m1">${t(m.name, m.nw, 21)}${m.clip ? clip : nothing}</div>
              ${m.date ? html`<div class="m2">${m.subj ? t(m.subj, m.sw!, 15) : html`<span></span>`}${t(m.date, m.dw, 15)}</div>` : nothing}
              ${m.pre ? html`<div class="m3">${t(m.pre, m.pw!, 15)}</div>` : nothing}</article>`)}
      </div>
      <div class="sb"><div class="sbb">${ic(12, 6, svg`<path d="M0 6l6-6 6 6z" fill=${G}/>`)}</div><div class="thumb"></div><div class="sbb down">${ic(12, 6, svg`<path d="M0 0h12L6 6z" fill=${G}/>`)}</div></div></div>
    </section>`;
  }

  private renderReading() {
    return html`<section class="read">
      <div class="rlabel">${ic(16, 16, svg`<path d="M1 8l7-7h7v6l-8 8q-1 0-2-1L1 9.500z" stroke="#222" stroke-width="1.300"/><circle cx="12" cy="4" r=".8" fill="#222"/>`)}${t("General", 44, 12, "bold")}<span class="x">${ic(7, 7, svg`<path d="M.5.5l6 6M6.500.5l-6 6" stroke="#555" stroke-width="2"/>`)}</span></div>
      <div class="rbar">${smReply}${t("Reply", 44, 17.5)}<span class="second">${smReplyAll}</span>${t("Reply All", 70, 17.5)}</div>
      <div class="rhead"><div class="av">${ic(72, 72, avatarShape, "0 0 144 144")}</div>
        <div class="rmeta"><div class="h24">${t("Mon 6/19", null, 15)}</div><div class="h40">${t("Khube Banjare", 136, 20.5)}</div><div class="h30">${t("Project Opportunity", null, 17, "semi")}</div></div></div>
      <div class="rto">${t("To", 15, 15)}<i class="pres"></i>${t("Amrita Shriwastav", 129, 16)}${ic(16, 10, svg`<path d="M1 9l7-7 7 7" stroke="#666" stroke-width="2.600"/>`)}</div>
      <div class="body">${t("Hello Amrita,", 118, 19, "", BODY)}${t(" ", null, 19)}${t("Do you have any", 148, 19, "", BODY)}${t(" ", null, 19)}${t("Thanks & Regards,", 161, 19, "", BODY)}${t("Khube Banjare", 128, 19, "", BODY)}</div>
    </section>`;
  }

  private renderCard() {
    const ring = svg`<circle cx="18" cy="18" r="16.900" stroke="#777" stroke-width="2"/>`;
    return html`<div class="card">
      <div class="ctop">${ic(14, 11, svg`<path d="M0 5.500h5" stroke="#777" stroke-width="1.600"/><path d="M5 0h1.500v2H11V1h2.500v9H11V9H6.500v2H5z" fill="#777"/>`)}${ic(11, 11, svg`<path d="M.5.5l10 10M10.500.5l-10 10" stroke="#777" stroke-width="1.200"/>`)}</div>
      <div class="chead"><div class="photo">${ic(144, 144, avatarShape)}</div>
        <div class="cinfo"><div class="cname">${t("Amrita Shriwastav", 283, 34.5)}</div><div class="cl">${t("Available", 71)}</div><div class="cl">${t("Consultant, 149307", 153.5)}</div>
          <div class="acts">
            ${ic(36, 36, svg`${ring}<path d="M9 10h18v13h-7l-5 4v-4H9z" fill="#777"/>`)}
            <span class="gap1">${ic(36, 36, svg`${ring}<path d="M11.500 10.500q2-3.500 4.500-1.500l1.500 5-2.300 2q1 4.500 4 6.500l3-1.200 3.300 3q-.5 4-4.500 4-10-2.500-9.500-17.800z" fill="#777"/>`)}</span>${caret}
            <span class="vid">${ic(36, 36, svg`${ring}<g fill="#777"><circle cx="14" cy="12.500" r="3.500"/><circle cx="21" cy="12" r="3.500"/><rect x="10" y="15" width="14" height="10"/><path d="M24 18l4-3v10l-4-3zM8 16h2v5H8z"/></g>`)}</span>
            <span class="mail2">${ic(36, 36, svg`${ring}<path d="M8 10h20v15H8z" fill="#777"/><path d="M8 12l10 7 10-7" stroke="#fff" stroke-width="1.800"/>`)}</span>${caret}
            <span class="add">${t("Add", 33, 17.5)}</span><span class="dots">${ic(17, 4, svg`<g fill="#666"><circle cx="2.200" cy="2" r="2"/><circle cx="8.500" cy="2" r="2"/><circle cx="14.800" cy="2" r="2"/></g>`)}</span>
          </div></div></div>
      <div class="ctabs"><div class="ct ct1">${t("CONTACT", 84, 17, "bold")}</div><div class="ct ct2">${t("ORGANIZATION", 130)}</div><div class="ct ct3">${t("MEMBERSHIP", 109)}</div></div>
      <div class="cbody"><div>
        <div class="sec mb1"><div class="h">${t("Calendar", 86, 20.5)}</div><div class="l mt1">${t("Schedule a meeting", 154)}</div></div>
        <div class="sec s23"><div class="h">${t("Send Email", 106, 20.5)}</div><div class="l ind"><span class="chk">${ic(9, 8, svg`<path d="M.8 4.500L3 7 8 .8" stroke="#4c9a82" stroke-width="1.500"/>`)}</span>${t("amrita.shriwastav@birlasoft.com", 257)}</div></div>
        <div class="sec s23"><div class="h">${t("Send Email", 106, 20.5)}</div><div class="l ind">${t("amritas1@birlasoft.com", 189)}</div></div>
        <div class="sec"><div class="h">${t("IM", 25, 20.5)}</div><div class="l ind">${t("amritas1@birlasoft.com", 189)}</div></div>
      </div><div>
        <div class="sec"><div class="h">${t("View Source", 120, 20.5)}</div><div class="l near">${t("SharePoint", 85)}</div><div class="l mt2">${t("Link Contacts...", 117)}</div></div>
        <div class="sec co"><div class="h">${t("Company", 93, 20.5)}</div><div class="l dark">${t("149307", 59)}</div></div>
      </div></div>
      <div class="grip">${ic(9, 9, svg`<path d="M6 0h3v3.500H6zM0 6h4v3H0zM6 6h3v3H6z" fill="#a0a0a0"/>`)}</div>
    </div>`;
  }

  private renderStatus() {
    return html`<footer class="status">${t("Items: 91", 62.5, 15)}<span class="bell">${ic(14, 16, svg`<path d="M1 10q2-1 2-5 1-4 4-5 3 1 4 5 0 4 2 5z" fill=${G}/><path d="M0 11.500h14" stroke=${G} stroke-width="1.600"/><path d="M5 13.500h4l-2 2z" fill=${G}/>`)}</span>${t("Reminders: 1", 91, 15)}
      <span class="allf">${t("All folders are up to date.", 173, 15)}</span><span class="conn">${t("Connected to: Microsoft Exchange", 234, 15)}</span>
      <div class="vw">${ic(20, 18, svg`<rect x=".6" y=".6" width="18.800" height="16.800" stroke=${G} stroke-width="1.200"/><path d="M6 1v16" stroke=${G} stroke-width="1.200"/>`)}</div>
      <span class="bk">${ic(20, 18, svg`<path d="M1 2l8-1 1 1 1-1 8 1v13l-8 1-1 1-1-1-8-1zM10 2v15M3 5h5M3 8h5M3 11h5M12 5h5M12 8h5M12 11h5" stroke=${G}/>`)}</span>
      <span class="zoom">${ic(186, 17, svg`<path d="M0 8.500h12" stroke="#666" stroke-width="3"/><path d="M16 8.500h150" stroke="#a0a0a0" stroke-width="1.200"/><path d="M88 .5h6.500v16H88z" fill="#666"/><path d="M172 8.500h13M178.500 2v13" stroke="#666" stroke-width="2.600"/>`)}</span>
      <span class="pct">${t("100%", 39, 15)}</span></footer>`;
  }

  private renderTask() {
    return html`<div class="task">
      <div class="weather"><span class="wi">${ic(38, 44, svg`<defs><linearGradient id="sun" x1="0" y1="0" x2="0" y2="1"><stop offset="0" stop-color="#ffd21e"/><stop offset="1" stop-color="#e8620c"/></linearGradient></defs><circle cx="20" cy="27" r="15" fill="url(#sun)"/><g stroke="#f7dba0" stroke-width="2.400" stroke-linecap="round"><path d="M9 18h8M9 23.500h27M3 30h17M25 30h7M3 36h28"/></g><circle cx="30.500" cy="14" r="11.700" fill="#ff98a2"/><text x="31" y="19" font-size="15.500" font-family="Open Sans" fill="#111" text-anchor="middle">1</text>`)}</span>
        <div class="wt">${t("88°F", 35)}<span class="haze">${t("Haze", 39)}</span></div></div>
      <div class="app">${ic(36, 36, svg`<defs><linearGradient id="win" x1="0" y1="0" x2="36" y2="36" gradientUnits="userSpaceOnUse"><stop offset="0" stop-color="#84e2ff"/><stop offset=".5" stop-color="#43c8ff"/><stop offset="1" stop-color="#0c9cf5"/></linearGradient></defs><path d="M0 0h17.300v17.300H0zM18.700 0H36v17.300H18.700zM0 18.700h17.300V36H0zM18.700 18.700H36V36H18.700z" fill="url(#win)"/>`)}</div>
      <div class="pill">${mag("#fff", 21)}${t("Search", 54, 17.5)}</div>
      <div class="app a36">${ic(36, 34, svg`<path d="M9 0h25q2 0 2 2v23H9z" fill="#f4f4f4"/><rect x="0" y="9" width="27" height="25" rx="1.500" fill="#777" opacity=".8"/><path d="M9 9h18v16H9z" fill="#b5b5b5"/>`)}</div>
      <div class="app a36 g29">${ic(34, 36, svg`<defs><linearGradient id="ch" x1="0" y1="0" x2="1" y2="1"><stop offset="0" stop-color="#9c68b0"/><stop offset=".4" stop-color="#7a7ddc"/><stop offset="1" stop-color="#5257c9"/></linearGradient></defs><path d="M17 1a17 17 0 1 1-7 32.500L0 35V18A17 17 0 0 1 17 1z" fill="url(#ch)"/><rect x="7" y="11" width="15" height="14" rx="3" fill="#fff"/><path d="M23 16l4-4v12l-4-4z" fill="#fff"/>`)}</div>
      <div class="app a36 g30 dot">${ic(36, 36, svg`<defs><linearGradient id="e1" x1="0" y1="0" x2="1" y2="0"><stop offset="0" stop-color="#1fa2e8"/><stop offset=".6" stop-color="#30c5d2"/><stop offset="1" stop-color="#6be04c"/></linearGradient><linearGradient id="e2" x1="0" y1="0" x2="0" y2="1"><stop offset="0" stop-color="#1b9de2"/><stop offset="1" stop-color="#1264bd"/></linearGradient></defs><path d="M1 13Q4 0 19 0q16 1 17 14 0 10-10 10-6 0-4-4 2-8-6-10Q6 8 1 13z" fill="url(#e1)"/><path d="M0 18q0-9 9-9 9 1 10 7-5 1-5 8 4 9 19 3-5 9-15 9Q1 35 0 18z" fill="url(#e2)"/><path d="M11 20q0-4 4-6-3 6 1 10 6 5 17 3-5 8-12 8-10-3-10-15z" fill="#0e4f99"/>`)}</div>
      <div class="app a36 g30 dot">${ic(36, 34, svg`<path d="M0 2q0-2 2-2h10l4 4v5H0z" fill="#dc9a10"/><path d="M0 6h13l4-3h17q2 0 2 2v28H0z" fill="#ffcf48"/><path d="M6 33V26q0-4 4-4h16q4 0 4 4v7z" fill="#1574c4"/><path d="M11 27.500h14" stroke="#0b4c8c" stroke-width="1.500"/>`)}</div>
      <div class="app ol g18">${ic(32, 32, svg`<path d="M13 8h18v17H13z" fill="#fff" stroke="#1578cc" stroke-width="2"/><path d="M18 10l6 7 7-8" stroke="#1578cc" stroke-width="2"/><path d="M0 3l19-3v32L0 29z" fill="#0f72c8"/><ellipse cx="9.500" cy="16" rx="4" ry="5.500" stroke="#fff" stroke-width="2.500"/>`)}</div>
      <div class="app g18 dot">${ic(38, 40, svg`<g><circle cx="30" cy="12" r="4" fill="#5059c9"/><path d="M24 17h11v12q0 6-6 6h-5z" fill="#5059c9"/><circle cx="20" cy="10" r="6" fill="#7b83eb"/><path d="M10 16h18v14q0 7-9 7t-9-7z" fill="#7b83eb"/><rect x="0" y="12" width="18" height="18" rx="2" fill="#4b53bc"/><path d="M4.500 17h9M9 17v9.500" stroke="#fff" stroke-width="2.400"/><circle cx="32" cy="11" r="12" fill="#d0142f"/><text x="32" y="16.500" font-size="16" font-family="Open Sans" font-weight="600" fill="#fff" text-anchor="middle">9+</text></g>`)}</div>
      <div class="app a36 g29 dot">${ic(36, 36, svg`<path d="M18 0l8.500 8.500-8.500 8.500-8.500-8.500z" fill="#fc7f81"/><path d="M8.500 9.500l8.500 8.500-8.500 8.500L0 18z" fill="#80b3ff"/><path d="M27.500 9.500L36 18l-8.500 8.500L19 18z" fill="#87d354"/><path d="M18 19l8.500 8.500L18 36l-8.500-8.500z" fill="#ffe680"/><path d="M11 4l7 7v15M18 11l8 7" stroke="#241c1c" stroke-width="2.200"/><circle cx="18" cy="11" r="3" fill="#241c1c"/><circle cx="18" cy="26" r="3.200" fill="#241c1c"/><circle cx="26" cy="18" r="3.200" fill="#241c1c"/>`)}</div>
      <div class="app a36 g30 dot">${ic(36, 36, svg`<circle cx="18" cy="18" r="18" fill="#fbbc14"/><path d="M18 18L2.400 9A18 18 0 0 1 33.600 9H18z" fill="#e23a2c"/><path d="M2.400 9A18 18 0 0 0 17 36l8.500-14L10.500 22z" fill="#2ba04c"/><circle cx="18" cy="18" r="9" fill="#fff"/><circle cx="18" cy="18" r="7" fill="#2b7cf0"/>`)}</div>
      <div class="tray">${ic(18, 10, svg`<path d="M1 9l8-8 8 8" stroke="#fff" stroke-width="1.500"/>`)}
        <span class="g1">${ic(25, 16, svg`<path d="M6 16a6 6 0 0 1-1-11Q8 0 13 0q5 0 7 5 5 1 5 6t-5 5z" fill="#1179d4"/><path d="M4 16q-2-4 2-6l7-3 10 6q0 3-4 3z" fill="#2ba4f0"/>`)}</span>
        <span class="g2">${ic(24, 18, svg`<g stroke="#fff" stroke-width="1.800" stroke-linecap="round"><path d="M1 7q11-11 22 0M4.500 10.500q7.500-7 15 0M8 13.500q4-3.500 8 0"/></g><circle cx="12" cy="16.500" r="1.600" fill="#fff"/>`)}</span>
        <span class="g3">${ic(24, 18, svg`<path d="M1 6h4l6-5v16l-6-5H1z" stroke="#fff" stroke-width="1.500"/><path d="M15 5.500l7 7M22 5.500l-7 7" stroke="#fff" stroke-width="1.500"/>`)}</span>
        <span class="g4">${ic(24, 20, svg`<path d="M10 3h10v14H6v-5M22 7v6" stroke="#fff" stroke-width="1.800"/><path d="M12 6h5v8H9v-3q3 0 3-3z" fill="#fff"/><path d="M2 0v4M7 0v4" stroke="#fff" stroke-width="1.500"/><path d="M0 4h9v3q0 3-3.500 3.500v9h-2v-9Q0 10 0 7z" fill="#fff"/>`)}</span>
        <div class="clock">${t("12:19 PM", 70)}${t("6/27/2023", 85)}</div><div class="nb">${t("11", 15, 15)}</div></div>
    </div>`;
  }

  render() {
    return html`<div class="win">${this.renderTop()}${this.renderRibbon()}
      <div class="main">${this.renderNav()}${this.renderList()}${this.renderReading()}</div>
      ${this.renderStatus()}${this.renderTask()}${this.renderCard()}</div>`;
  }
}
